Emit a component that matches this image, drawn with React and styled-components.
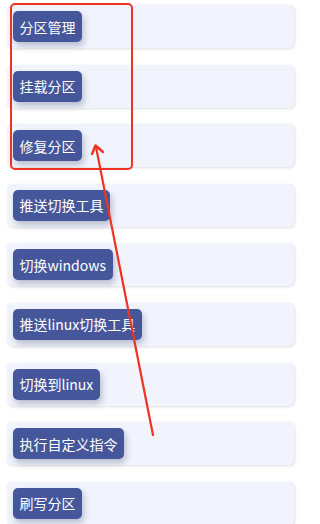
import styled, { createGlobalStyle } from "styled-components";

const GlobalStyle = createGlobalStyle`
  html, body {
    margin: 0;
    padding: 0;
    background: #ffffff;
  }
  body {
    font-family: "Noto Sans CJK SC", "Noto Sans", sans-serif;
  }
`;

const Page = styled.div`
  position: relative;
  width: 300px;
  height: 524px;
  overflow: hidden;
  background: #ffffff;
`;

const List = styled.div`
  display: flex;
  flex-direction: column;
  gap: 16.6px;
  padding: 5px 6px 0 7px;
`;

const Card = styled.div`
  height: 43px;
  box-sizing: border-box;
  padding: 6px;
  display: flex;
  align-items: flex-start;
  background: #f1f4fd;
  border-radius: 5px;
  box-shadow: 1px 1px 3px rgba(0, 0, 0, 0.12), 0 0 1px rgba(0, 0, 0, 0.05);
`;

const ActionButton = styled.div`
  height: 31px;
  box-sizing: border-box;
  padding: 0 6.5px;
  display: flex;
  align-items: center;
  background: #45569b;
  color: #ffffff;
  font-size: 14px;
  line-height: 1;
  border-radius: 5px;
  box-shadow: 2px 4px 6px rgba(40, 50, 90, 0.28);
  white-space: nowrap;
`;

const Highlight = styled.div`
  position: absolute;
  left: 10px;
  top: 3px;
  width: 123px;
  height: 167px;
  box-sizing: border-box;
  border: 2px solid #ee3322;
  border-radius: 5px;
  pointer-events: none;
`;

const ArrowLayer = styled.svg`
  position: absolute;
  left: 0;
  top: 0;
  pointer-events: none;
`;

const actions = [
  "分区管理",
  "挂载分区",
  "修复分区",
  "推送切换工具",
  "切换windows",
  "推送linux切换工具",
  "切换到linux",
  "执行自定义指令",
  "刷写分区",
];

export default function App() {
  return (
    <Page>
      <GlobalStyle />
      <List>
        {actions.map((label) => (
          <Card key={label}>
            <ActionButton>{label}</ActionButton>
          </Card>
        ))}
      </List>
      <Highlight />
      <ArrowLayer width="300" height="524" viewBox="0 0 300 524">
        <line x1="153" y1="435" x2="96" y2="147" stroke="#ee3322" strokeWidth="2.2" strokeLinecap="round" />
        <polyline
          points="92,154 95.5,145.5 103,152"
          fill="none"
          stroke="#ee3322"
          strokeWidth="2.4"
          strokeLinecap="round"
          strokeLinejoin="round"
        />
      </ArrowLayer>
    </Page>
  );
}
